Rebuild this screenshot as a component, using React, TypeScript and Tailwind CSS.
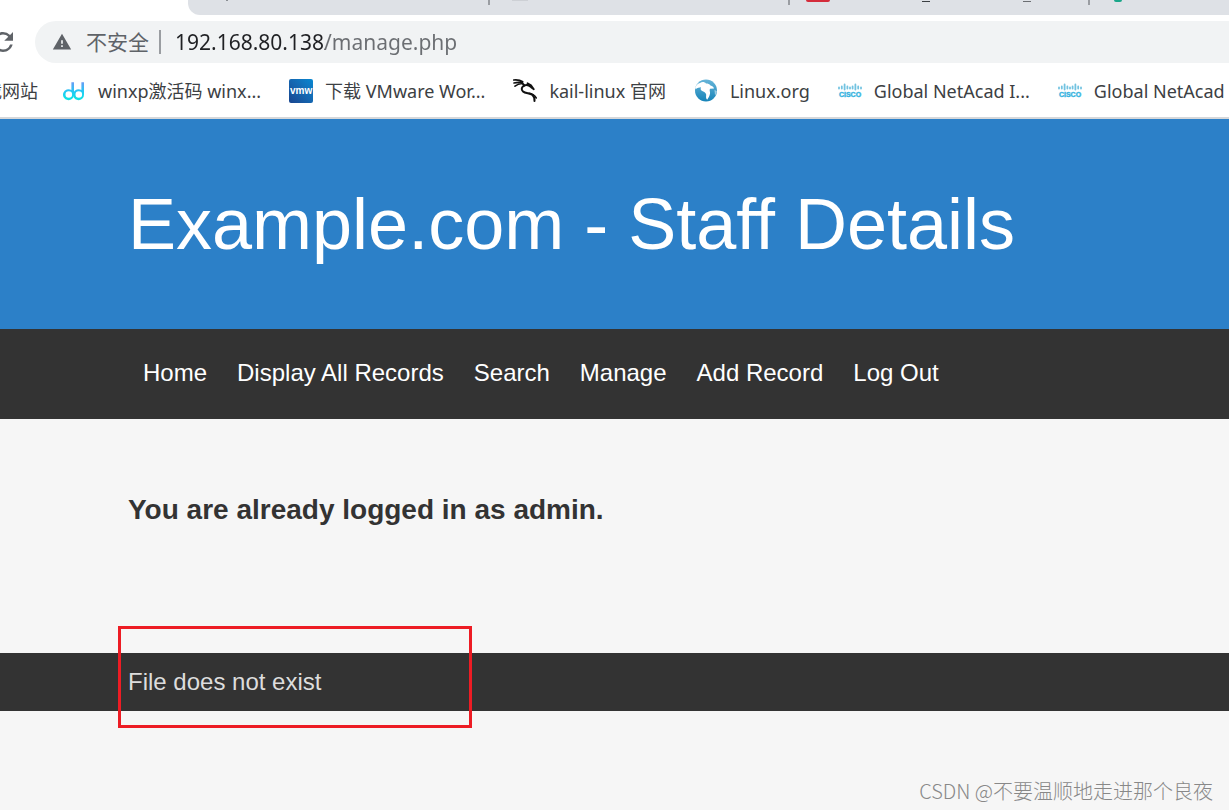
import type { ReactNode } from "react";
import { MdRefresh, MdWarning } from "react-icons/md";

const DdIcon = () => (
  <svg viewBox="0 0 24 24" className="size-6 shrink-0" fill="none">
    <defs>
      <linearGradient id="dd" x1="0" y1="0" x2="0" y2="1">
        <stop offset="0" stopColor="#6b9cf5" />
        <stop offset="0.5" stopColor="#23c8f5" />
        <stop offset="1" stopColor="#0ce6e2" />
      </linearGradient>
    </defs>
    <g fill="url(#dd)">
      <path
        fillRule="evenodd"
        d="M9.4 3.200h2.600v12.200a5.500 5.500 0 1 1-2.600-4.400zM6.800 12.200a3.300 3.300 0 1 0 0 6.600 3.300 3.300 0 0 0 0-6.600z"
      />
      <path
        fillRule="evenodd"
        d="M19.400 3.200h2.600v12.200a5.500 5.500 0 1 1-2.600-4.400zM16.800 12.200a3.300 3.300 0 1 0 0 6.600 3.300 3.300 0 0 0 0-6.600z"
      />
    </g>
  </svg>
);

const VmwIcon = () => (
  <span className="flex size-6 shrink-0 items-center justify-center rounded-xs bg-linear-to-tr from-[#18458f] to-[#0588d2] font-['Liberation_Sans'] text-[10px] leading-none font-bold text-white">
    vmw
  </span>
);

const KaliIcon = () => (
  <svg
    viewBox="0 0 24 24"
    className="size-6 shrink-0"
    fill="none"
    stroke="#111"
    strokeLinecap="round"
    strokeLinejoin="round"
  >
    <path
      d="M.7 1c3.500-.3 6.500 0 9 1.600M1 4c3-.8 5.500-.8 8.500-.4M2 7.200c2.200-1.700 4.500-2.400 7-2.700"
      strokeWidth="1.600"
    />
    <path
      d="M8.500 3.500l3 3c-3 1.200-3.700 4-1.500 6 2.500 2.200 7 1.300 9.500 3.500 1.700 1.600 2.200 3.500 2 6"
      strokeWidth="2"
    />
    <path
      d="M11.500 6.500c2-1 4.500-.2 6.500 1.700l2.800 2-2.800-4-3.500-2"
      strokeWidth="1.800"
    />
    <path d="M16 14.200c3 .2 5.500 1.800 7.300 4.800" strokeWidth="1.500" />
  </svg>
);

const GlobeIcon = () => (
  <svg viewBox="0 0 24 24" className="size-6 shrink-0">
    <defs>
      <linearGradient id="globe" x1="0" y1="0" x2="0" y2="1">
        <stop offset="0" stopColor="#67b5d9" />
        <stop offset="1" stopColor="#1683b8" />
      </linearGradient>
    </defs>
    <circle cx="12" cy="11.500" r="11" fill="url(#globe)" />
    <path
      d="M1 9c1-3 3-4.500 5-5 2-1.500 5-1 6 .5 2 0 3.500.5 4.500 2 2 .5 3.500 2 3.500 3l-4 .2c-1 2 .5 3 0 5-.6 2.600-1.500 4-2.800 6-1.400-1-1.200-3-1-5-.2-2-2-3-3.500-3.500-2-1-2.500-2-1.700-4-1.500.5-4 .5-5 1.800z"
      fill="#fff"
    />
    <path
      d="M20.500 11l2.300 1c-.2 2-1 3.500-1.800 4.500z"
      fill="#fff"
      opacity=".5"
    />
  </svg>
);

const CiscoIcon = () => (
  <svg viewBox="0 0 24 24" className="size-6 shrink-0">
    <path
      d="M1 8.500v1M3.800 7.500v2M6.600 5.500v5M9.400 7.500v2M12 8.500v1M14.600 7.500v2M17.400 5.500v5M20.200 7.500v2M23 8.500v1"
      stroke="#72c3e1"
      strokeWidth="1.800"
      strokeLinecap="round"
    />
    <text
      x="12"
      y="18"
      textAnchor="middle"
      fontFamily="Liberation Sans, sans-serif"
      fontSize="7"
      fontWeight="bold"
      fill="#37b4e0"
      stroke="#37b4e0"
      strokeWidth=".4"
    >
      CISCO
    </text>
  </svg>
);

type Bookmark = { label: string; icon: ReactNode };

const bookmarks: Bookmark[] = [
  { label: "winxp激活码 winx...", icon: <DdIcon /> },
  { label: "下载 VMware Wor...", icon: <VmwIcon /> },
  { label: "kail-linux 官网", icon: <KaliIcon /> },
  { label: "Linux.org", icon: <GlobeIcon /> },
  { label: "Global NetAcad I...", icon: <CiscoIcon /> },
  { label: "Global NetAcad I...", icon: <CiscoIcon /> },
];

const navLinks = [
  "Home",
  "Display All Records",
  "Search",
  "Manage",
  "Add Record",
  "Log Out",
];

const TabStrip = () => (
  <div className="ml-47 flex h-[15px] overflow-hidden rounded-bl-xl bg-[#dee1e6]">
    <div className="h-[5px] w-75 shrink-0 pl-[38px]">
      <div className="h-px w-0.5 bg-[#8b8f94]" />
    </div>
    <div className="h-[5px] w-75 shrink-0 border-l-2 border-[#9a9da2] pl-[22px]">
      <div className="h-px w-4 bg-[#cdd0d5]" />
    </div>
    <div className="flex h-[5px] w-75 shrink-0 items-start border-l-2 border-[#9a9da2] pl-4">
      <div className="h-0.5 w-6 rounded-b-sm bg-[#d42c3b]" />
      <div className="mt-px ml-[92px] h-px w-2 bg-[#3c4043]" />
      <div className="mt-px ml-[93px] h-px w-2 bg-[#6b6e72]" />
    </div>
    <div className="h-[5px] grow border-l-2 border-[#9a9da2] pl-6">
      <div className="h-0.5 w-2 rounded-b-full bg-[#1aa68a]" />
    </div>
  </div>
);

const AddressBar = () => (
  <div className="mt-1.5 flex h-[42px] items-center">
    <button
      type="button"
      aria-label="Reload"
      className="-ml-3 shrink-0 text-[#5f6368]"
    >
      <MdRefresh size={30} />
    </button>
    <div className="ml-[17px] flex h-full grow items-center rounded-l-full bg-[#f1f3f4] pl-[17px]">
      <MdWarning size={20} className="shrink-0 text-[#5f6368]" />
      <span className="ml-3.5 shrink-0 pt-0.5 text-[21px] text-[#5f6368]">
        不安全
      </span>
      <span className="ml-2.5 h-6 w-0.5 shrink-0 bg-[#9a9da1]" />
      <input
        aria-label="Address"
        defaultValue="192.168.80.138/manage.php"
        className="ml-3.5 min-w-0 grow bg-linear-to-r from-[#202124] from-[150px] to-[#6b6e72] to-[150px] bg-clip-text pt-0.5 text-[21px] text-transparent outline-none"
      />
    </div>
  </div>
);

const BookmarksBar = () => (
  <nav
    aria-label="Bookmarks"
    className="flex h-14 items-center gap-7 overflow-hidden border-b-2 border-[#d5d7da] pt-0.5 text-[18px] whitespace-nowrap text-[#3c4043]"
  >
    <a href="#" className="-mr-1 -ml-[34px] shrink-0">
      下载网站
    </a>
    {bookmarks.map((bookmark, index) => (
      <a key={index} href="#" className="flex shrink-0 items-center gap-3">
        {bookmark.icon}
        {bookmark.label}
      </a>
    ))}
  </nav>
);

const App = () => {
  return (
    <div className="relative min-h-screen overflow-hidden bg-[#f6f6f6] font-['Liberation_Sans',Arial,sans-serif]">
      <div className="bg-white font-['Noto_Sans','Noto_Sans_CJK_SC',sans-serif]">
        <TabStrip />
        <AddressBar />
        <BookmarksBar />
      </div>

      <header className="bg-[#2c80c8] px-32 py-[60px] text-white">
        <h1 className="text-[72px] leading-[90px]">
          Example.com - Staff Details
        </h1>
      </header>

      <nav
        aria-label="Main"
        className="bg-[#333] px-32 pt-[26px] pb-7 text-white"
      >
        <ul className="flex gap-[30px] pl-[15px] text-[24px] leading-[36px]">
          {navLinks.map((link) => (
            <li key={link}>
              <a href="#">{link}</a>
            </li>
          ))}
        </ul>
      </nav>

      <main className="px-32 pt-[73px] pb-[125px]">
        <h3 className="text-[28px] leading-[36px] font-bold text-[#333]">
          You are already logged in as admin.
        </h3>
      </main>

      <footer className="bg-[#333] px-32 py-[11px] text-[#ddd]">
        <div className="relative text-[24px] leading-[36px]">
          <p>File does not exist</p>
          <div className="absolute -top-[38px] -left-2.5 h-[102px] w-[354px] border-3 border-[#ed1c24]" />
        </div>
      </footer>

      <p className="absolute right-4 bottom-1 font-['Noto_Sans_CJK_SC',sans-serif] text-[20px] leading-[30px] font-light text-[#888]">
        CSDN @不要温顺地走进那个良夜
      </p>
    </div>
  );
};

export default App;
